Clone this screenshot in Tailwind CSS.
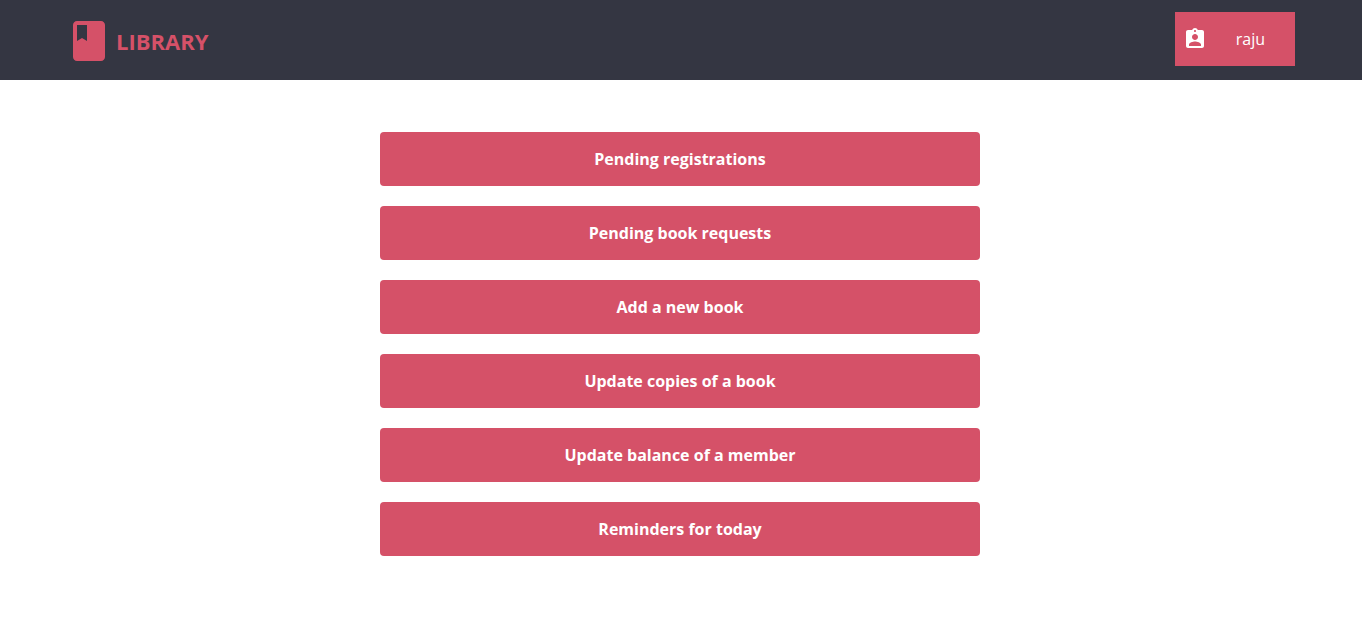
<!DOCTYPE html>
<html lang="en">
<head>
<meta charset="utf-8">
<meta name="viewport" content="width=device-width, initial-scale=1">
<title>Library</title>
<script src="https://cdn.jsdelivr.net/npm/@tailwindcss/browser@4"></script>
</head>
<body class="bg-white font-['Open_Sans',sans-serif] text-base">
<header class="flex h-20 items-start justify-between bg-[#343642] pr-[67px] pl-[65px]">
  <a href="#" class="flex items-center gap-[3px] pt-[17px] text-[#d55168]">
    <svg class="size-12" viewBox="0 0 24 24" fill="currentColor" aria-hidden="true"><path d="M18 2H6c-1.100 0-2 .9-2 2v16c0 1.100.9 2 2 2h12c1.100 0 2-.9 2-2V4c0-1.100-.9-2-2-2zM6 4h5v8l-2.500-1.500L6 12V4z"/></svg>
    <span class="text-[22px] font-bold">LIBRARY</span>
  </a>
  <button type="button" class="mt-3 flex h-[54px] w-[120px] items-center justify-between bg-[#d55168] pr-[30px] pl-2 text-white">
    <svg class="size-6" viewBox="0 0 24 24" fill="currentColor" aria-hidden="true"><path d="M19 3h-4.180C14.400 1.840 13.300 1 12 1c-1.300 0-2.400.84-2.820 2H5c-1.100 0-2 .9-2 2v14c0 1.100.9 2 2 2h14c1.100 0 2-.9 2-2V5c0-1.100-.9-2-2-2zm-7 0c.55 0 1 .45 1 1s-.45 1-1 1-1-.45-1-1 .45-1 1-1zm0 4c1.660 0 3 1.340 3 3s-1.340 3-3 3-3-1.340-3-3 1.340-3 3-3zm6 12H6v-1.400c0-2 4-3.100 6-3.100s6 1.100 6 3.100V19z"/></svg>
    <span>raju</span>
  </button>
</header>
<main class="flex justify-center pt-[52px] pr-[22px] pb-5 pl-5">
  <nav class="flex w-full max-w-[600px] flex-col gap-5 text-center font-bold text-white" aria-label="Library tasks">
    <a href="#" class="rounded bg-[#d55168] py-[15px]">Pending registrations</a>
    <a href="#" class="rounded bg-[#d55168] py-[15px]">Pending book requests</a>
    <a href="#" class="rounded bg-[#d55168] py-[15px]">Add a new book</a>
    <a href="#" class="rounded bg-[#d55168] py-[15px]">Update copies of a book</a>
    <a href="#" class="rounded bg-[#d55168] py-[15px]">Update balance of a member</a>
    <a href="#" class="rounded bg-[#d55168] py-[15px]">Reminders for today</a>
  </nav>
</main>
</body>
</html>
